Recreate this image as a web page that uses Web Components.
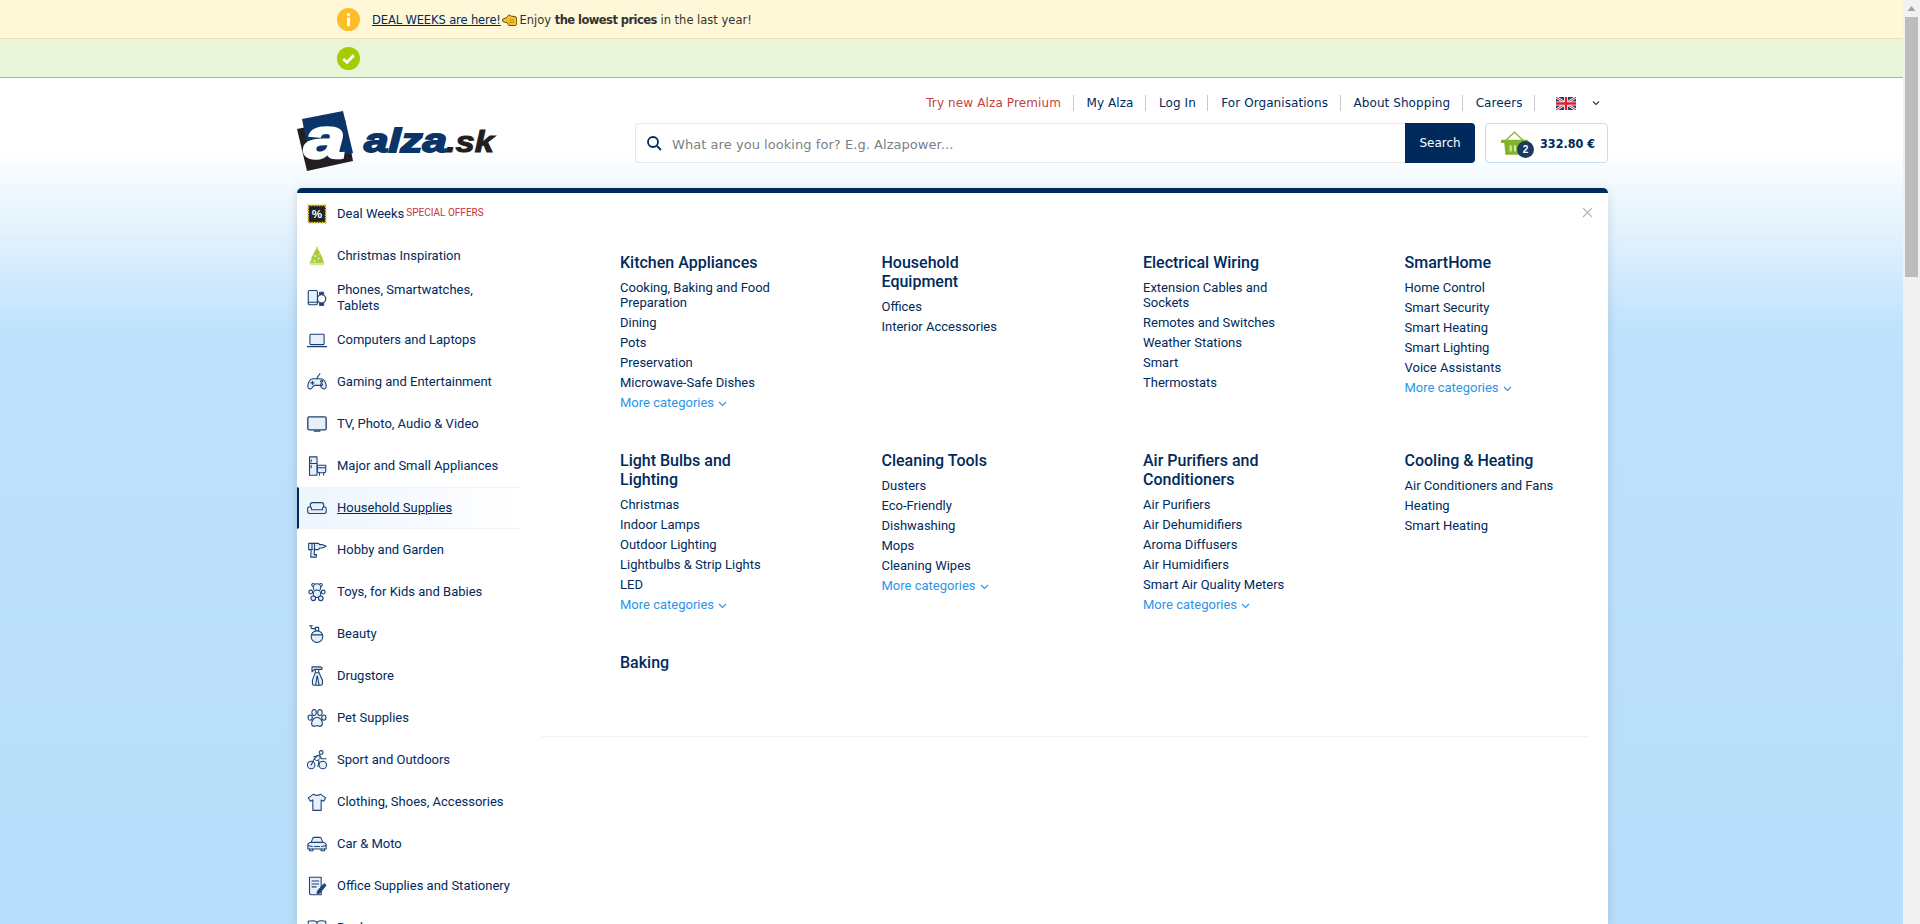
<!DOCTYPE html>
<html lang="en">
<head>
<meta charset="utf-8">
<title>Alza.sk</title>
<style>
    html, body {
        margin: 0;
        height: 924px;
        overflow: hidden;
        font-family: "Roboto", "Liberation Sans", sans-serif;
        color: #002a5c;
    }
    body {
        display: flex;
    }
</style>
</head>
<body>
<alza-shell>
    <alza-notice slot="notices" kind="info"><a href="#">DEAL WEEKS are here!</a><alza-icon name="hand" size="15"></alza-icon> Enjoy <b>the lowest prices</b> in the last year!</alza-notice>
    <alza-notice slot="notices" kind="ok"></alza-notice>
    <alza-header slot="header"></alza-header>
    <alza-sidebar slot="sidebar">
        <alza-side-item icon="deal"><span>Deal Weeks</span><small>SPECIAL OFFERS</small></alza-side-item>
        <alza-side-item icon="tree">Christmas Inspiration</alza-side-item>
        <alza-side-item icon="phone">Phones, Smartwatches,<br>Tablets</alza-side-item>
        <alza-side-item icon="laptop">Computers and Laptops</alza-side-item>
        <alza-side-item icon="gamepad">Gaming and Entertainment</alza-side-item>
        <alza-side-item icon="tv">TV, Photo, Audio &amp; Video</alza-side-item>
        <alza-side-item icon="appliance">Major and Small Appliances</alza-side-item>
        <alza-side-item icon="sofa" active>Household Supplies</alza-side-item>
        <alza-side-item icon="drill">Hobby and Garden</alza-side-item>
        <alza-side-item icon="teddy">Toys, for Kids and Babies</alza-side-item>
        <alza-side-item icon="perfume">Beauty</alza-side-item>
        <alza-side-item icon="spray">Drugstore</alza-side-item>
        <alza-side-item icon="paw">Pet Supplies</alza-side-item>
        <alza-side-item icon="bike">Sport and Outdoors</alza-side-item>
        <alza-side-item icon="shirt">Clothing, Shoes, Accessories</alza-side-item>
        <alza-side-item icon="car">Car &amp; Moto</alza-side-item>
        <alza-side-item icon="office">Office Supplies and Stationery</alza-side-item>
        <alza-side-item icon="book">Books</alza-side-item>
    </alza-sidebar>
    <alza-menu slot="menu">
        <alza-category heading="Kitchen Appliances" more>
            <a href="#">Cooking, Baking and Food Preparation</a><a href="#">Dining</a><a href="#">Pots</a><a href="#">Preservation</a><a href="#">Microwave-Safe Dishes</a>
        </alza-category>
        <alza-category heading="Household Equipment">
            <a href="#">Offices</a><a href="#">Interior Accessories</a>
        </alza-category>
        <alza-category heading="Electrical Wiring">
            <a href="#">Extension Cables and Sockets</a><a href="#">Remotes and Switches</a><a href="#">Weather Stations</a><a href="#">Smart</a><a href="#">Thermostats</a>
        </alza-category>
        <alza-category heading="SmartHome" more>
            <a href="#">Home Control</a><a href="#">Smart Security</a><a href="#">Smart Heating</a><a href="#">Smart Lighting</a><a href="#">Voice Assistants</a>
        </alza-category>
        <alza-category heading="Light Bulbs and Lighting" more>
            <a href="#">Christmas</a><a href="#">Indoor Lamps</a><a href="#">Outdoor Lighting</a><a href="#">Lightbulbs &amp; Strip Lights</a><a href="#">LED</a>
        </alza-category>
        <alza-category heading="Cleaning Tools" more>
            <a href="#">Dusters</a><a href="#">Eco-Friendly</a><a href="#">Dishwashing</a><a href="#">Mops</a><a href="#">Cleaning Wipes</a>
        </alza-category>
        <alza-category heading="Air Purifiers and Conditioners" more>
            <a href="#">Air Purifiers</a><a href="#">Air Dehumidifiers</a><a href="#">Aroma Diffusers</a><a href="#">Air Humidifiers</a><a href="#">Smart Air Quality Meters</a>
        </alza-category>
        <alza-category heading="Cooling &amp; Heating">
            <a href="#">Air Conditioners and Fans</a><a href="#">Heating</a><a href="#">Smart Heating</a>
        </alza-category>
        <alza-category heading="Baking"></alza-category>
    </alza-menu>
</alza-shell>
<alza-scrollbar></alza-scrollbar>

<script>
const LINE = 'fill="#e6f0fb" stroke="#1d4273" stroke-width="1.300" stroke-linejoin="round" stroke-linecap="round"';
const NOFILL = 'fill="none" stroke="#1d4273" stroke-width="1.300" stroke-linejoin="round" stroke-linecap="round"';

const ICONS = {
    hand: `<path d="M1 10l7-3 3-4 4 2 7 1 1.500 2v10L22 20H11l-3-5H4l-3-2z" fill="#fbbf2e" stroke="#5a4a10" stroke-width="1.500" stroke-linejoin="round"/><path d="M12 11h7M12 15h7" stroke="#8a6a10"/>`,
    deal: `<rect x="1.500" y="1.500" width="21" height="21" fill="#222" stroke="#e8d02a" stroke-width="2.200" stroke-dasharray="1.800 1.400"/><text x="12" y="17" text-anchor="middle" font-family="Liberation Sans" font-weight="700" font-size="14" fill="#fff">%</text>`,
    tree: `<path d="M12 0l1.500 3h-3z" fill="#f0c92e"/><path d="M12 2l4.500 7-1-.2 4 6.200-1.300-.2L21 21H3l2.800-6.200-1.300.2 4-6.200-1 .2z" fill="#a9cc3e"/><rect x="3.500" y="20" width="17" height="3" rx="1.300" fill="#d3e59a"/><circle cx="10" cy="12" r="1.100" fill="#eef6d0"/><circle cx="14" cy="15" r="1.100" fill="#eef6d0"/><circle cx="9" cy="18" r="1.100" fill="#eef6d0"/><circle cx="15" cy="10" r=".8" fill="#eef6d0"/>`,
    phone: `<rect x="1.500" y="3" width="11" height="17" rx="1.500" ${LINE}/><path d="M1.500 17h11" ${NOFILL}/><path d="M15 8V5h5v3M15 18v3h5v-3" fill="#1d4273" stroke="#1d4273"/><circle cx="17.500" cy="13" r="5" fill="#fff" stroke="#1d4273" stroke-width="1.500"/>`,
    laptop: `<rect x="3.500" y="5" width="17" height="12.500" rx="1" ${LINE}/><path d="M.5 20h23" stroke="#1d4273" stroke-width="1.600" stroke-linecap="round"/>`,
    gamepad: `<path d="M7 8h10c3.500 0 6 5 6 9.500 0 3-3 3.500-5 1.500l-2.500-3h-7L6 19c-2 2-5 1.500-5-1.500C1 13 3.500 8 7 8z" ${LINE}/><path d="M12 8c0-3 2-3 3.500-6M6.500 11v4M4.500 13h4" ${NOFILL}/><circle cx="17.500" cy="11" r="1.200" ${NOFILL}/><circle cx="17.500" cy="15" r="1.200" ${NOFILL}/>`,
    tv: `<rect x="1" y="3.500" width="22" height="15.500" rx="1.500" fill="#e6f0fb" stroke="#1d4273" stroke-width="1.600"/><path d="M8 20.500h8" stroke="#1d4273" stroke-width="1.600"/>`,
    appliance: `<rect x="3" y="1" width="9" height="22" ${LINE}/><path d="M3 9h9M5 4.500v2.500M5 11v3" ${NOFILL}/><path d="M12.500 11h10v7c0 1-1 2-2 2h-6c-1 0-2-1-2-2z" ${LINE}/><path d="M15 20v3M20 20v3M22 14h-9" ${NOFILL}/>`,
    sofa: `<path d="M4 11V8c0-1.500 1-2.500 2.500-2.500h11c1.500 0 2.500 1 2.500 2.500v3" ${LINE}/><path d="M3 10.500c1.500 0 2.500 1 2.500 2.500v1h13v-1c0-1.500 1-2.500 2.500-2.500s2 1 2 2.500v3c0 1.500-1 2.500-2.500 2.500h-17C1.500 18.500.8 17.500.8 16v-3c0-1.500.7-2.500 2.200-2.500z" ${LINE}/>`,
    drill: `<path d="M2 4h12l1 1.500h3L23 7.500 18 9.500h-3L14 11.500H2z" ${LINE}/><path d="M5 11.500l-.5 9h6.500l.5-3H8.500l.5-6" ${LINE}/><path d="M6 4v7.500M9 4v7.500" ${NOFILL}/>`,
    teddy: `<circle cx="7.500" cy="3.500" r="1.800" ${LINE}/><circle cx="16.500" cy="3.500" r="1.800" ${LINE}/><circle cx="12" cy="6.500" r="4.500" ${LINE}/><ellipse cx="12" cy="14" rx="4.500" ry="4.500" ${LINE}/><circle cx="4.500" cy="12" r="2.300" ${LINE}/><circle cx="19.500" cy="12" r="2.300" ${LINE}/><circle cx="7.500" cy="19.500" r="2.800" ${LINE}/><circle cx="16.500" cy="19.500" r="2.800" ${LINE}/>`,
    perfume: `<circle cx="12" cy="15" r="7" ${LINE}/><path d="M5.500 13h13" ${NOFILL}/><rect x="10" y="4" width="4" height="4" ${LINE}/><path d="M10 5.500H6c-1 0-1.500-1-1-2.500M3 2h3.500" ${NOFILL}/>`,
    spray: `<path d="M6 1h10l2 1v2H9L6 7zM10 4v4M14 4v4" ${LINE}/><path d="M10 8h4.500l4 9v4c0 1-1 2-2 2h-8c-1 0-2-1-2-2v-4z" ${LINE}/><path d="M12 12l-1.500 11M12.500 12l2 11" ${NOFILL}/>`,
    paw: `<path d="M12 11c3 0 6.500 4 6.500 7.500 0 2.500-2 3.500-3.500 3.500l-3-1-3 1c-1.500 0-3.500-1-3.500-3.500C5.500 15 9 11 12 11z" ${LINE}/><ellipse cx="3.800" cy="11.500" rx="2.600" ry="3.200" ${LINE}/><ellipse cx="20.200" cy="11.500" rx="2.600" ry="3.200" ${LINE}/><ellipse cx="8.500" cy="5.500" rx="2.700" ry="3.700" ${LINE}/><ellipse cx="15.500" cy="5.500" rx="2.700" ry="3.700" ${LINE}/>`,
    bike: `<circle cx="5" cy="18" r="4.500" ${LINE}/><circle cx="19" cy="18" r="4.500" ${LINE}/><circle cx="17" cy="3" r="2.300" ${LINE}/><path d="M5 18l4-8 6-4 2.500 4.500H23M9 10l5.500 3.500L13 20M15 6L8 8" ${NOFILL}/><path d="M8.500 11l5.500-5 2 4-4 3z" fill="#e6f0fb" stroke="#1d4273"/>`,
    shirt: `<path d="M8 2.500L1.500 7l2.500 4L7 9.500V22h10V9.500l3 1.500L22.500 7 16 2.500c-1 2-7 2-8 0z" ${LINE}/>`,
    car: `<path d="M5 10l2-5c.3-.8 1-1 2-1h6c1 0 1.700.2 2 1l2 5c2.500.5 4 1.500 4 3v5H1v-5c0-1.500 1.500-2.500 4-3z" ${LINE}/><path d="M5 10h14M1.500 14l5 1M22.500 14l-5 1M9 15h6M3 18v2h4v-2M17 18v2h4v-2" ${NOFILL}/>`,
    office: `<path d="M3 1.500h14v21H5c-1 0-2-1-2-2z" ${LINE}/><path d="M6 6h8M6 9.500h8M6 13h5" ${NOFILL}/><path d="M20.500 9l2.500 2-7.500 9.500-3.500 1 .5-3.500z" fill="#1d4273" stroke="#1d4273"/>`,
    book: `<path d="M1.500 4c4-1 7.500-1 10.500 1 3-2 6.500-2 10.500-1v15c-4-1-7.500-1-10.500 1-3-2-6.500-2-10.500-1z" ${LINE}/><path d="M12 5v15" ${NOFILL}/>`
};

class AlzaIcon extends HTMLElement {
    connectedCallback() {
        const size = this.getAttribute("size") || 20;
        this.attachShadow({mode: "open"}).innerHTML = `
            <style>
                :host { display: inline-flex; width: ${size}px; height: ${size}px; vertical-align: middle; }
                svg { width: 100%; height: 100%; display: block; }
            </style>
            <svg viewBox="0 0 24 24">${ICONS[this.getAttribute("name")]}</svg>`;
    }
}

class AlzaNotice extends HTMLElement {
    connectedCallback() {
        const info = this.getAttribute("kind") === "info";
        const mark = info
            ? `<circle cx="12" cy="12" r="12" fill="#fdbd27"/><circle cx="12" cy="7" r="1.700" fill="#fff"/><rect x="10.500" y="10" width="3" height="9" fill="#fff"/>`
            : `<circle cx="12" cy="12" r="12" fill="#a4cc00"/><path d="M6.500 12.500l4 3.500 7-7.500" fill="none" stroke="#fff" stroke-width="3"/>`;
        this.attachShadow({mode: "open"}).innerHTML = `
            <style>
                :host {
                    display: flex;
                    align-items: center;
                    height: ${info ? 37 : 38}px;
                    padding: ${info ? 1 : 0}px 0 0 337px;
                    gap: 12px;
                    background: ${info ? "#fff8d8" : "#e8f5d8"};
                    border-bottom: 1px solid ${info ? "#ece2b6" : "#a4cc2a"};
                    font: 11.5px "DejaVu Sans", sans-serif;
                    color: #333;
                }
                svg { width: 23px; height: 23px; flex: none; }
                div { padding-top: 1px; }
                ::slotted(a) { color: #002a5c; letter-spacing: -.12px; }
                ::slotted(b) { letter-spacing: -.55px; }
                ::slotted(alza-icon) { margin: 0 -1px 0 1px; }
            </style>
            <svg viewBox="0 0 24 24">${mark}</svg>
            <div><slot></slot></div>`;
    }
}

class AlzaLogo extends HTMLElement {
    connectedCallback() {
        this.attachShadow({mode: "open"}).innerHTML = `
            <style>
                :host { display: block; width: 204px; height: 64px; flex: none; margin-top: 30px; }
                svg { display: block; overflow: visible; }
                text { font-family: "Liberation Sans", sans-serif; font-weight: 700; }
            </style>
            <svg width="204" height="64" viewBox="0 0 204 64">
                <polygon points="0,21 48,11 56,53 10,63" fill="#231f20"/>
                <polygon points="5,11 46,3 56,45 13,52" fill="#0b3468"/>
                <text x="7" y="50" font-size="58" font-style="italic" fill="#fff" stroke="#fff" stroke-width="2.500" textLength="41" lengthAdjust="spacingAndGlyphs">a</text>
                <text x="67" y="44" font-size="34" font-style="italic" fill="#0b3468" stroke="#0b3468" stroke-width="1.800" textLength="83" lengthAdjust="spacingAndGlyphs">alza</text>
                <text x="149" y="44" font-size="29" font-style="italic" fill="#231f20" stroke="#231f20" stroke-width="1" textLength="48" lengthAdjust="spacingAndGlyphs">.sk</text>
            </svg>`;
    }
}

class AlzaHeader extends HTMLElement {
    connectedCallback() {
        const links = ["Try new Alza Premium", "My Alza", "Log In", "For Organisations", "About Shopping", "Careers"];
        this.attachShadow({mode: "open"}).innerHTML = `
            <style>
                :host {
                    display: flex;
                    align-items: flex-start;
                    width: 1311px;
                    height: 110px;
                    margin-left: 297px;
                    box-sizing: border-box;
                }
                .right { flex: 1; display: flex; flex-direction: column; align-items: flex-end; gap: 12px; padding-top: 17px; }
                nav { display: flex; align-items: center; height: 16px; font: 12px "DejaVu Sans", sans-serif; padding-right: 8px; letter-spacing: .07px; }
                nav a { color: #002a5c; text-decoration: none; padding: 0 11.5px 0 13px; border-right: 1px solid #c8c8c8; line-height: 16px; white-space: nowrap; }
                nav a.premium { color: #c6413f; padding-left: 0; letter-spacing: .12px; }
                .flag { width: 20px; height: 13px; margin-left: 21px; }
                .chev { width: 8px; height: 6px; margin-left: 16px; }
                .tools { display: flex; gap: 10px; }
                form {
                    display: flex;
                    width: 840px;
                    height: 40px;
                    margin: 0;
                    box-sizing: border-box;
                    background: #fff;
                    border: 1px solid #e4e7ec;
                    border-right: 0;
                    border-radius: 4px;
                }
                form svg { width: 18px; height: 18px; margin: 10px 9px 0 9px; flex: none; }
                .field { flex: 1; align-self: center; font: 13px "DejaVu Sans", sans-serif; color: #7a7f87; letter-spacing: .05px; padding-top: 2px; }
                button {
                    width: 70px;
                    margin: -1px 0;
                    border: 0;
                    border-radius: 0 4px 4px 0;
                    background: #002a5c;
                    color: #fff;
                    font: 12px "DejaVu Sans", sans-serif;
                    padding: 0 0 1px;
                }
                .cart {
                    display: flex;
                    align-items: center;
                    width: 123px;
                    height: 40px;
                    box-sizing: border-box;
                    padding-left: 14px;
                    background: #fff;
                    border: 1px solid #bfe0fb;
                    border-radius: 4px;
                    position: relative;
                }
                .basket { width: 30px; height: 28px; flex: none; }
                .badge {
                    position: absolute;
                    left: 31px;
                    top: 17px;
                    width: 17px;
                    height: 17px;
                    border-radius: 50%;
                    background: #1a3a66;
                    color: #fff;
                    font: 700 10px/17px "Liberation Sans", sans-serif;
                    text-align: center;
                }
                .price { font: 700 12.5px "DejaVu Sans Condensed", "DejaVu Sans", sans-serif; margin-left: 10px; white-space: nowrap; color: #002a5c; }
            </style>
            <alza-logo></alza-logo>
            <div class="right">
                <nav>
                    ${links.map((l, i) => `<a href="#" class="${i === 0 ? "premium" : ""}">${l}</a>`).join("")}
                    <svg class="flag" viewBox="0 0 20 13">
                        <rect width="20" height="13" fill="#1f3d7a"/>
                        <path d="M0 0l20 13M20 0L0 13" stroke="#fff" stroke-width="2.600"/>
                        <path d="M0 0l20 13M20 0L0 13" stroke="#d6202e" stroke-width="1"/>
                        <path d="M10 0v13M0 6.500h20" stroke="#fff" stroke-width="4"/>
                        <path d="M10 0v13M0 6.500h20" stroke="#d6202e" stroke-width="2.400"/>
                    </svg>
                    <svg class="chev" viewBox="0 0 8 6"><path d="M1 1.500l3 3 3-3" fill="none" stroke="#333" stroke-width="1.100"/></svg>
                </nav>
                <div class="tools">
                    <form onsubmit="return false">
                        <svg viewBox="0 0 18 18"><circle cx="8" cy="8" r="5" fill="none" stroke="#002a5c" stroke-width="1.800"/><path d="M12 12l4 4" stroke="#002a5c" stroke-width="1.800"/></svg>
                        <div class="field">What are you looking for? E.g. Alzapower...</div>
                        <button>Search</button>
                    </form>
                    <div class="cart">
                        <svg class="basket" viewBox="0 0 28 26">
                            <path d="M5 11L13.500 3 22 11" fill="none" stroke="#8cbc38" stroke-width="1.300"/>
                            <path d="M1 10h25v3h-2l-1 11H5L4 13H1z" fill="#83b32d"/>
                            <path d="M10 15v6M14 15v6" stroke="#cfe3a0" stroke-width="2"/>
                        </svg>
                        <div class="badge">2</div>
                        <div class="price">332.80 €</div>
                    </div>
                </div>
            </div>`;
    }
}

class AlzaSideItem extends HTMLElement {
    connectedCallback() {
        const active = this.hasAttribute("active");
        this.attachShadow({mode: "open"}).innerHTML = `
            <style>
                :host {
                    display: flex;
                    align-items: center;
                    flex: none;
                    height: 42px;
                    box-sizing: border-box;
                    padding-left: ${active ? 8 : 10}px;
                    gap: 10px;
                    font: 13px/16px "Roboto", sans-serif;
                    color: #002a5c;
                    ${active ? `border-left: 2px solid #002a5c;
                    border-top: 1px solid #f0f2f5;
                    border-bottom: 1px solid #f0f2f5;
                    background: linear-gradient(90deg, #edf5fd, #fff);
                    text-decoration: underline;` : ""}
                }
                ::slotted(small) { font-size: 10px; color: #c6313f; position: relative; top: -2px; margin-left: 2px; }
            </style>
            <alza-icon name="${this.getAttribute("icon")}"></alza-icon>
            <div><slot></slot></div>`;
    }
}

class AlzaSidebar extends HTMLElement {
    connectedCallback() {
        this.attachShadow({mode: "open"}).innerHTML = `
            <style>
                :host {
                    display: flex;
                    flex-direction: column;
                    width: 224px;
                    flex: none;
                    height: 760px;
                    background: #fff;
                    box-shadow: 3px 0 8px rgba(0, 0, 0, .08);
                    position: relative;
                }
            </style>
            <slot></slot>`;
    }
}

class AlzaCategory extends HTMLElement {
    connectedCallback() {
        const more = this.hasAttribute("more");
        this.attachShadow({mode: "open"}).innerHTML = `
            <style>
                :host { display: block; padding-bottom: 41px; }
                h3 {
                    margin: 0 0 8px;
                    width: 150px;
                    font: 500 16px/19px "Roboto", sans-serif;
                    color: #002a5c;
                }
                ::slotted(a) {
                    display: block;
                    width: 165px;
                    margin-bottom: 5px;
                    font: 13px/15px "Roboto", sans-serif;
                    color: #002a5c;
                    text-decoration: none;
                }
                .more { font: 13px/15px "Roboto", sans-serif; color: #2c95ea; display: flex; align-items: center; gap: 4px; }
                .more svg { width: 9px; height: 6px; margin-top: 2px; }
            </style>
            <h3>${this.getAttribute("heading")}</h3>
            <slot></slot>
            ${more ? `<div class="more">More categories <svg viewBox="0 0 9 6"><path d="M1 1l3.500 3.500L8 1" fill="none" stroke="#2c95ea" stroke-width="1.100"/></svg></div>` : ""}`;
    }
}

class AlzaMenu extends HTMLElement {
    connectedCallback() {
        this.attachShadow({mode: "open"}).innerHTML = `
            <style>
                :host { display: block; flex: 1; min-width: 0; position: relative; background: #fff; }
                .grid {
                    display: grid;
                    grid-template-columns: repeat(3, 261.500px) 1fr;
                    padding: 60px 0 0 99px;
                }
                hr { margin: 15px 20px 0 20px; border: 0; border-top: 1px solid #f0f2f5; }
                .close { position: absolute; right: 14px; top: 13px; width: 13px; height: 13px; }
            </style>
            <svg class="close" viewBox="0 0 13 13"><path d="M2 2l9 9M11 2l-9 9" stroke="#b5bac2" stroke-width="1.300"/></svg>
            <div class="grid"><slot></slot></div>
            <hr>`;
    }
}

class AlzaShell extends HTMLElement {
    connectedCallback() {
        this.attachShadow({mode: "open"}).innerHTML = `
            <style>
                :host {
                    display: block;
                    flex: 1;
                    min-width: 0;
                    background: linear-gradient(#fff 150px, #bfe2fc 330px, #b8defb);
                }
                .panel {
                    display: flex;
                    width: 1311px;
                    height: 736px;
                    margin-left: 297px;
                    box-sizing: border-box;
                    border-top: 5px solid #002a5c;
                    border-radius: 5px 5px 0 0;
                    background: #fff;
                    box-shadow: 0 2px 12px rgba(0, 0, 0, .12);
                }
            </style>
            <slot name="notices"></slot>
            <slot name="header"></slot>
            <div class="panel">
                <slot name="sidebar"></slot>
                <slot name="menu"></slot>
            </div>`;
    }
}

class AlzaScrollbar extends HTMLElement {
    connectedCallback() {
        this.attachShadow({mode: "open"}).innerHTML = `
            <style>
                :host { display: block; width: 17px; flex: none; height: 924px; background: #f1f1f1; }
                svg { display: block; width: 17px; height: 17px; }
                div { width: 13px; height: 260px; margin-left: 2px; background: #bcbcbc; }
            </style>
            <svg viewBox="0 0 17 17"><path d="M8.500 6l4 5h-8z" fill="#a3a3a3"/></svg>
            <div></div>`;
    }
}

customElements.define("alza-icon", AlzaIcon);
customElements.define("alza-notice", AlzaNotice);
customElements.define("alza-logo", AlzaLogo);
customElements.define("alza-header", AlzaHeader);
customElements.define("alza-side-item", AlzaSideItem);
customElements.define("alza-sidebar", AlzaSidebar);
customElements.define("alza-category", AlzaCategory);
customElements.define("alza-menu", AlzaMenu);
customElements.define("alza-shell", AlzaShell);
customElements.define("alza-scrollbar", AlzaScrollbar);
</script>
</body>
</html>
